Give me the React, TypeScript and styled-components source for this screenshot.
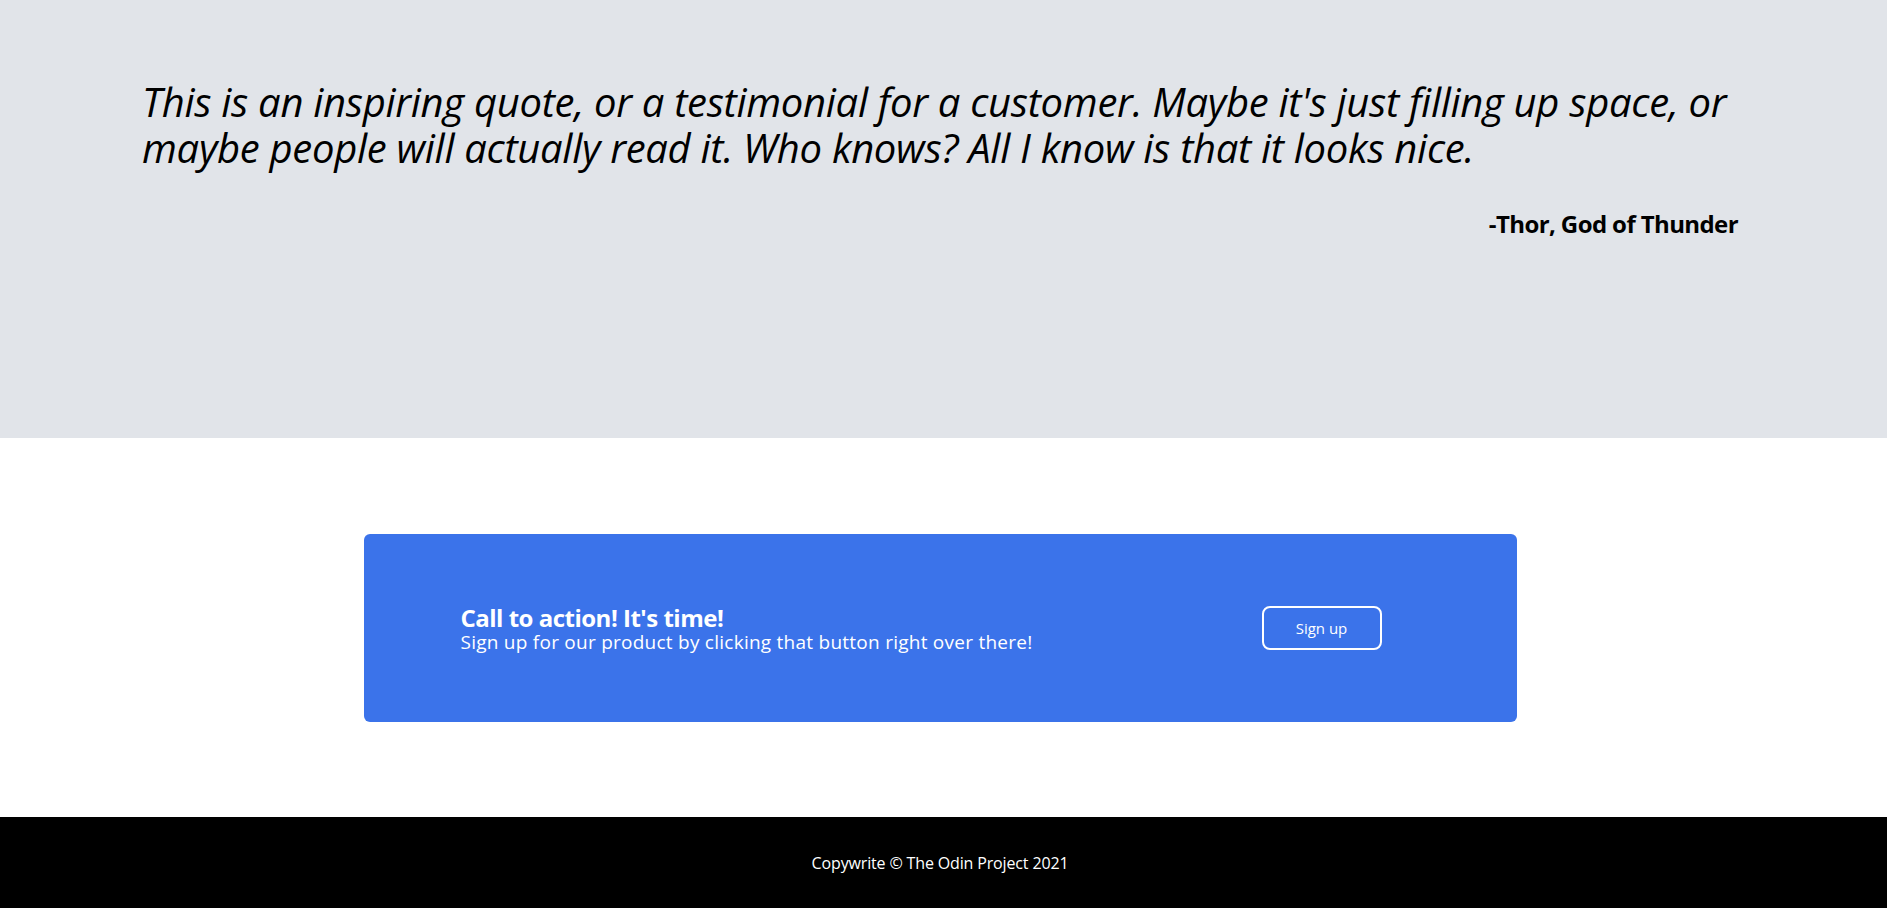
import React from "react";
import styled, { createGlobalStyle } from "styled-components";

const GlobalStyle = createGlobalStyle`
  html, body {
    margin: 0;
    padding: 0;
    background: #ffffff;
  }
  body {
    font-family: "Open Sans", "Noto Sans", "Liberation Sans", sans-serif;
    color: #000000;
  }
  * { box-sizing: border-box; }
`;

const QuoteSection = styled.section`
  background: #e1e4e9;
  height: 438px;
  padding: 79px 149px 0 142px;
`;

const Quote = styled.p`
  margin: 0;
  font-style: italic;
  font-weight: 400;
  font-size: 40px;
  line-height: 46px;
  letter-spacing: -0.3px;
  color: #000000;
`;

const Author = styled.p`
  margin: 39px 0 0;
  text-align: right;
  font-weight: 700;
  font-size: 24px;
  line-height: 28px;
  letter-spacing: -0.6px;
`;

const CtaSection = styled.section`
  display: flex;
  justify-content: center;
  padding: 96px 7px 95px 0;
`;

const CtaCard = styled.div`
  width: 1153px;
  height: 188px;
  background: #3b73ea;
  border-radius: 6px;
  display: flex;
  align-items: center;
  justify-content: space-between;
  padding: 0 135px 0 97px;
  color: #ffffff;
`;

const CtaText = styled.div`
  display: flex;
  flex-direction: column;
  gap: 1px;
`;

const CtaTitle = styled.h2`
  margin: 0;
  font-size: 24px;
  font-weight: 700;
  line-height: 27px;
  letter-spacing: -0.5px;
`;

const CtaSubtitle = styled.p`
  margin: 0;
  font-size: 19px;
  font-weight: 400;
  line-height: 21px;
  letter-spacing: 0.25px;
`;

const SignUpButton = styled.button`
  width: 120px;
  height: 44px;
  border: 2px solid #ffffff;
  border-radius: 8px;
  background: transparent;
  color: #ffffff;
  font-family: "Open Sans", "Noto Sans", sans-serif;
  font-size: 15px;
  cursor: pointer;
`;

const Footer = styled.footer`
  background: #000000;
  height: 91px;
  display: flex;
  align-items: center;
  justify-content: center;
  padding-right: 7px;
  color: #ffffff;
  font-size: 16px;
  font-weight: 500;
  letter-spacing: -0.15px;
`;

export default function App() {
  return (
    <>
      <GlobalStyle />
      <QuoteSection>
        <Quote>
          This is an inspiring quote, or a testimonial for a customer. Maybe it's just filling up
          space, or maybe people will actually read it. Who knows? All I know is that it looks nice.
        </Quote>
        <Author>-Thor, God of Thunder</Author>
      </QuoteSection>
      <CtaSection>
        <CtaCard>
          <CtaText>
            <CtaTitle>Call to action! It's time!</CtaTitle>
            <CtaSubtitle>Sign up for our product by clicking that button right over there!</CtaSubtitle>
          </CtaText>
          <SignUpButton>Sign up</SignUpButton>
        </CtaCard>
      </CtaSection>
      <Footer>Copywrite © The Odin Project 2021</Footer>
    </>
  );
}
